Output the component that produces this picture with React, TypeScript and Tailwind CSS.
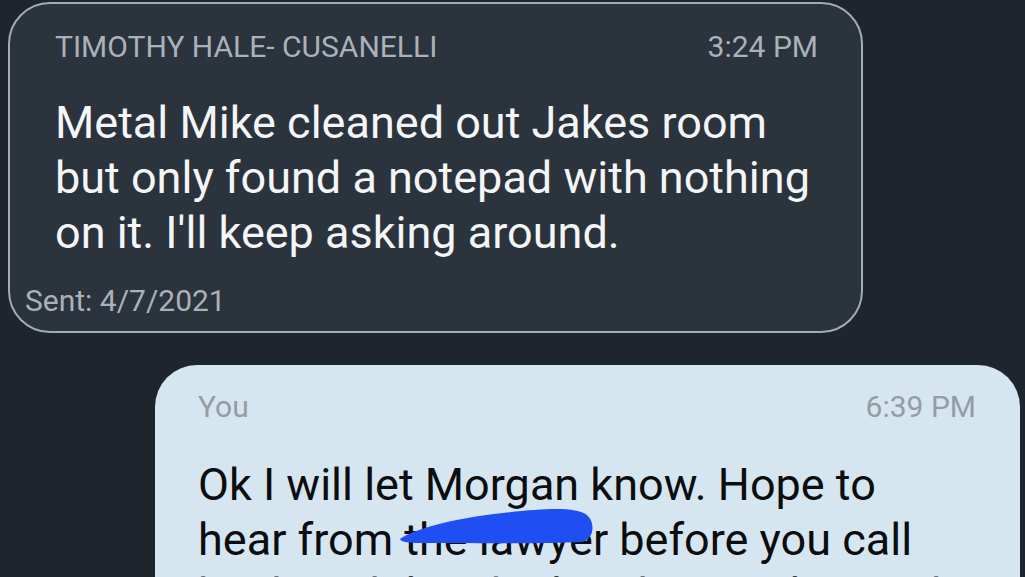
import React from 'react';

const roboto = { fontFamily: 'Roboto, "Noto Sans", sans-serif' };

function Scribble() {
  // blue marker blot drawn over part of the second line
  return (
    <svg
      className="absolute left-[243px] top-[142px] w-[200px] h-[40px] pointer-events-none"
      viewBox="0 0 200 40"
    >
      <path
        d="M2 32 C 14 23, 55 11, 105 6 C 150 1, 178 0, 189 8 C 198 16, 196 33, 183 35 C 150 37, 80 36, 30 36 C 15 36, 3 36, 2 32 Z"
        fill="#1f4ff2"
      />
    </svg>
  );
}

export default function App() {
  return (
    <div className="w-[1025px] h-[577px] overflow-hidden bg-[#1f252d] flex flex-col" style={roboto}>
      {/* incoming message */}
      <div className="ml-[8px] mt-[2px] w-[855px] rounded-[42px] border-2 border-[#a3abb4] bg-[#2b333d] pt-[25px] pb-[12px] pl-[15px] pr-[43px]">
        <div className="pl-[30px] flex items-center justify-between text-[30px] leading-[36px] text-[#aab1b9]">
          <span>TIMOTHY HALE- CUSANELLI</span>
          <span>3:24 PM</span>
        </div>
        <p className="pl-[30px] mt-[30px] text-[45px] leading-[55px] text-[#f3f5f7]">
          Metal Mike cleaned out Jakes room
          <br />
          but only found a notepad with nothing
          <br />
          on it. I&apos;ll keep asking around.
        </p>
        <div className="mt-[23px] text-[30px] leading-[36px] text-[#aab1b9]">Sent: 4/7/2021</div>
      </div>

      {/* outgoing message */}
      <div className="relative ml-[155px] mt-[32px] w-[865px] rounded-t-[42px] bg-[#d6e6f1] pt-[24px] pl-[43px] pr-[44px] pb-[40px]">
        <div className="flex items-center justify-between text-[30px] leading-[36px] text-[#959ca3]">
          <span>You</span>
          <span>6:39 PM</span>
        </div>
        <p className="mt-[32px] text-[45px] leading-[55px] text-[#0c0d0e]">
          Ok I will let Morgan know. Hope to
          <br />
          hear from the lawyer before you call
          <br />
          back and then let him know what to do
        </p>
        <Scribble />
      </div>
    </div>
  );
}
